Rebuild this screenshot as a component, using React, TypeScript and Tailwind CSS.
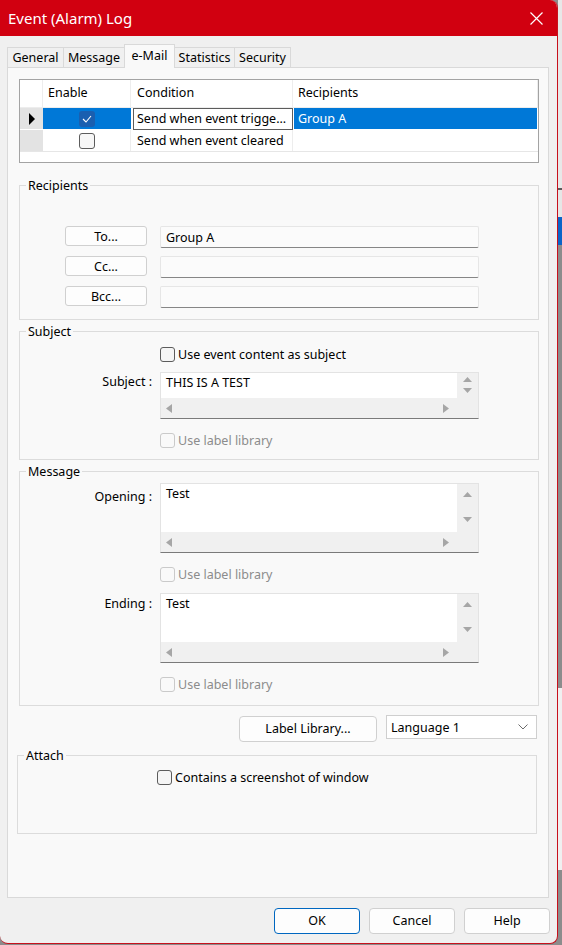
import type { ReactNode } from 'react'

function Tri({ dir }: { dir: 'up' | 'down' | 'left' | 'right' }) {
  if (dir === 'up')
    return (
      <svg width="9" height="5" viewBox="0 0 9 5">
        <path d="M0 5 L4.5 0 L9 5 Z" fill="#a6a6a6" />
      </svg>
    )
  if (dir === 'down')
    return (
      <svg width="9" height="5" viewBox="0 0 9 5">
        <path d="M0 0 L4.5 5 L9 0 Z" fill="#a6a6a6" />
      </svg>
    )
  if (dir === 'left')
    return (
      <svg width="6" height="9" viewBox="0 0 6 9">
        <path d="M6 0 L0 4.5 L6 9 Z" fill="#a6a6a6" />
      </svg>
    )
  return (
    <svg width="6" height="9" viewBox="0 0 6 9">
      <path d="M0 0 L6 4.5 L0 9 Z" fill="#a6a6a6" />
    </svg>
  )
}

function CheckRow({ label, disabled }: { label: string; disabled?: boolean }) {
  return (
    <div className="flex items-center h-[15px]">
      <div
        className={`w-[15px] h-[15px] rounded-[3px] border ${
          disabled ? 'border-[#cacaca] bg-[#f9f9f9]' : 'border-[#5c5c5c] bg-[#f5f5f5]'
        }`}
      />
      <span className={`ml-[3px] mt-px leading-[16px] ${disabled ? 'text-[#8c8c8c]' : 'text-black'}`}>{label}</span>
    </div>
  )
}

function ScrollBox({ text, tall }: { text: string; tall?: boolean }) {
  return (
    <div className="w-[319px] border border-[#e3e3e3] border-b-[#7a7a7a] bg-[#f0f0f0]">
      <div className={`flex ${tall ? 'h-[48px]' : 'h-[25px]'}`}>
        <div className="w-[296px] bg-white px-[5px] pt-[2px] leading-[16px] text-black">{text}</div>
        <div
          className={`w-[21px] flex flex-col items-center justify-between ${
            tall ? 'pt-[8px] pb-[10px]' : 'pt-[4px] pb-[5px]'
          }`}
        >
          <Tri dir="up" />
          <Tri dir="down" />
        </div>
      </div>
      <div className="h-[20px] flex items-center">
        <div className="w-[296px] flex items-center justify-between pl-[5px] pr-[8px]">
          <Tri dir="left" />
          <Tri dir="right" />
        </div>
      </div>
    </div>
  )
}

function Group({ title, className, children }: { title: string; className: string; children: ReactNode }) {
  return (
    <div className={`relative border border-[#dcdcdc] ${className}`}>
      <span className="absolute left-[6px] top-[-8px] px-[2px] bg-[#f9f9f9] leading-[16px] text-black">{title}</span>
      {children}
    </div>
  )
}

function RecipientRow({ label, value }: { label: string; value: string }) {
  return (
    <div className="flex items-start pl-[45px]">
      <button className="w-[82px] h-[20px] rounded-[3px] border border-[#d0d0d0] bg-[#fdfdfd] pt-px leading-[18px] text-black">
        {label}
      </button>
      <div className="ml-[13px] w-[319px] h-[22px] rounded-[2px] border border-[#e6e6e6] border-b-[#868686] bg-[#fbfbfb] pl-[5px] pt-px leading-[20px] text-black">
        {value}
      </div>
    </div>
  )
}

const tabs = [
  { name: 'General', w: 'w-[57px]' },
  { name: 'Message', w: 'w-[62px]' },
  { name: 'e-Mail', w: 'w-[51px]', active: true },
  { name: 'Statistics', w: 'w-[61px]' },
  { name: 'Security', w: 'w-[57px]' },
]

export default function App() {
  return (
    <div className="w-[562px] h-[945px] flex overflow-hidden bg-[#8c8c8c] font-['Noto_Sans',sans-serif] text-[12.5px]">
      {/* dialog */}
      <div className="w-[558px] h-[944px] flex flex-col bg-[#f0f0f0] border-r border-b border-[#c8101c] rounded-tr-[8px] rounded-b-[8px] overflow-hidden">
        {/* title bar */}
        <div className="h-[36px] shrink-0 bg-[#d10010] flex items-center justify-between pl-[8px] pr-[14px]">
          <span className="text-white text-[15px] leading-[20px]">Event (Alarm) Log</span>
          <svg width="13" height="13" viewBox="0 0 13 13">
            <path d="M0.5 0.5 L12.5 12.5 M12.5 0.5 L0.5 12.5" stroke="#ffffff" strokeWidth="1.2" />
          </svg>
        </div>

        <div className="flex flex-col pl-[7px]">
          {/* tabs */}
          <div className="mt-[8px] flex items-end h-[23px] relative z-10">
            {tabs.map((t) =>
              t.active ? (
                <div
                  key={t.name}
                  className={`${t.w} h-[24px] -mb-px -ml-px border border-b-0 border-[#d9d9d9] bg-[#f9f9f9] flex items-start justify-center pt-[3px] leading-[16px] text-black`}
                >
                  {t.name}
                </div>
              ) : (
                <div
                  key={t.name}
                  className={`${t.w} h-[20px] -ml-px first:ml-0 border border-b-0 border-[#d9d9d9] bg-[#f0f0f0] flex items-center justify-center leading-[16px] text-black`}
                >
                  {t.name}
                </div>
              )
            )}
          </div>

          {/* tab panel */}
          <div className="w-[542px] h-[831px] border border-[#d9d9d9] bg-[#f9f9f9] pl-[11px] flex flex-col">
            {/* grid */}
            <div className="mt-[11px] w-[520px] h-[84px] border border-[#a3a3a3] bg-white text-black">
              <div className="flex h-[28px] border-b border-[#ededed]">
                <div className="w-[23px] border-r border-[#ededed]" />
                <div className="w-[88px] pl-[5px] flex items-center border-r border-[#ededed]">Enable</div>
                <div className="w-[162px] pl-[6px] flex items-center border-r border-[#ededed]">Condition</div>
                <div className="flex-1 pl-[5px] flex items-center border-r border-[#ededed]">Recipients</div>
              </div>
              <div className="flex h-[22px] border-b border-white">
                <div className="w-[23px] bg-[#e3e3e3] flex items-center pl-[9px]">
                  <svg width="6" height="12" viewBox="0 0 6 12">
                    <path d="M0 0 L6 6 L0 12 Z" fill="#000000" />
                  </svg>
                </div>
                <div className="w-[88px] bg-[#0078d7] flex items-center justify-center">
                  <div className="w-[16px] h-[16px] rounded-[3px] bg-[#1a5fb0] flex items-center justify-center">
                    <svg width="10" height="8" viewBox="0 0 10 8">
                      <path d="M1 4 L4 7 L9 1" stroke="#ffffff" strokeWidth="1.1" fill="none" />
                    </svg>
                  </div>
                </div>
                <div className="w-[162px] pl-[2px] bg-white">
                  <div className="h-[22px] border border-[#5c5c5c] pl-[3px] leading-[20px] whitespace-nowrap overflow-hidden">
                    Send when event trigge...
                  </div>
                </div>
                <div className="flex-1 ml-px mr-px bg-[#0078d7] text-white pl-[4px] leading-[21px]">Group A</div>
              </div>
              <div className="flex h-[22px] border-b border-[#e6e6e6]">
                <div className="w-[23px] bg-[#e3e3e3]" />
                <div className="w-[88px] flex items-center justify-center border-r border-[#ededed]">
                  <div className="w-[16px] h-[16px] rounded-[3px] border border-[#5c5c5c] bg-[#f7f7f7]" />
                </div>
                <div className="w-[162px] pl-[6px] leading-[21px] border-r border-[#ededed]">Send when event cleared</div>
                <div className="flex-1" />
              </div>
            </div>

            {/* Recipients */}
            <Group title="Recipients" className="mt-[22px] w-[520px] pt-[40px] pb-[11px] flex flex-col gap-[8px]">
              <RecipientRow label="To..." value="Group A" />
              <RecipientRow label="Cc..." value="" />
              <RecipientRow label="Bcc..." value="" />
            </Group>

            {/* Subject */}
            <Group title="Subject" className="mt-[11px] w-[520px] pt-[15px] pb-[11px] flex flex-col">
              <div className="pl-[140px]">
                <CheckRow label="Use event content as subject" />
              </div>
              <div className="mt-[10px] flex">
                <div className="w-[140px] pr-[8px] pt-[2px] text-right leading-[16px] text-black">Subject :</div>
                <ScrollBox text="THIS IS A TEST" />
              </div>
              <div className="mt-[14px] pl-[140px]">
                <CheckRow label="Use label library" disabled />
              </div>
            </Group>

            {/* Message */}
            <Group title="Message" className="mt-[11px] w-[520px] pt-[11px] pb-[13px] flex flex-col">
              <div className="flex">
                <div className="w-[140px] pr-[8px] pt-[6px] text-right leading-[16px] text-black">Opening :</div>
                <ScrollBox text="Test" tall />
              </div>
              <div className="mt-[14px] pl-[140px]">
                <CheckRow label="Use label library" disabled />
              </div>
              <div className="mt-[11px] flex">
                <div className="w-[140px] pr-[8px] pt-[3px] text-right leading-[16px] text-black">Ending :</div>
                <ScrollBox text="Test" tall />
              </div>
              <div className="mt-[14px] pl-[140px]">
                <CheckRow label="Use label library" disabled />
              </div>
            </Group>

            {/* label library row */}
            <div className="mt-[9px] w-[518px] flex justify-end items-start">
              <button className="mt-px w-[138px] h-[26px] rounded-[4px] border border-[#d0d0d0] bg-[#fdfdfd] text-black leading-[24px]">
                Label Library...
              </button>
              <div className="ml-[9px] w-[151px] h-[24px] border border-[#cfcfcf] bg-white flex items-center justify-between pl-[4px] pr-[8px] text-black">
                <span className="mt-px leading-[16px]">Language 1</span>
                <svg width="10" height="6" viewBox="0 0 10 6">
                  <path d="M0.5 0.5 L5 5 L9.5 0.5" stroke="#6b6b6b" strokeWidth="1" fill="none" />
                </svg>
              </div>
            </div>

            {/* Attach */}
            <Group title="Attach" className="mt-[13px] -ml-[2px] w-[520px] h-[79px] pt-[14px] pl-[139px]">
              <CheckRow label="Contains a screenshot of window" />
            </Group>
          </div>

          {/* bottom buttons */}
          <div className="mt-[10px] w-[543px] flex justify-end gap-[9px] text-black">
            <button className="w-[86px] h-[26px] rounded-[4px] border border-[#0067c0] bg-[#fdfdfd] leading-[24px]">OK</button>
            <button className="w-[86px] h-[26px] rounded-[4px] border border-[#d0d0d0] bg-[#fdfdfd] leading-[24px]">Cancel</button>
            <button className="w-[86px] h-[26px] rounded-[4px] border border-[#d0d0d0] bg-[#fdfdfd] leading-[24px]">Help</button>
          </div>
        </div>
      </div>

      {/* window behind the dialog */}
      <div className="w-[4px] flex flex-col">
        <div className="h-[188px] bg-[#e8e8e8]" />
        <div className="h-[2px] bg-[#5a5a5a]" />
        <div className="h-[27px] bg-[#e6e6e6]" />
        <div className="h-[28px] bg-[#0a64c8]" />
        <div className="h-[443px] bg-[#8c8c8c]" />
        <div className="h-[182px] bg-[#f0f0f0]" />
        <div className="flex-1 bg-[#8c8c8c]" />
      </div>
    </div>
  )
}
